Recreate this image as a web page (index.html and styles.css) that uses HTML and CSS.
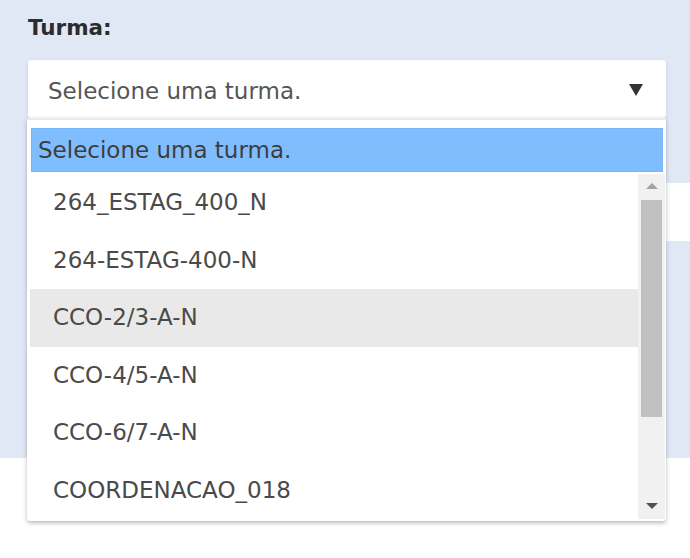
FILE: index.html
```html
<!DOCTYPE html>
<html lang="pt-BR">
<head>
<meta charset="utf-8">
<title>Turma</title>
<link rel="stylesheet" href="styles.css">
</head>
<body>
<div class="page">
  <div class="panel">
    <div class="label">Turma:</div>
    <div class="select">
      <span class="select-text">Selecione uma turma.</span>
      <span class="caret"></span>
    </div>
    <div class="field2"></div>
  </div>
  <div class="footer"></div>

  <div class="dropdown">
    <div class="option-selected">Selecione uma turma.</div>
    <div class="list">
      <div class="items">
        <div class="item">264_ESTAG_400_N</div>
        <div class="item">264-ESTAG-400-N</div>
        <div class="item hover">CCO-2/3-A-N</div>
        <div class="item">CCO-4/5-A-N</div>
        <div class="item">CCO-6/7-A-N</div>
        <div class="item">COORDENACAO_018</div>
      </div>
      <div class="scrollbar">
        <div class="sb-btn"><span class="sb-up"></span></div>
        <div class="sb-thumb"></div>
        <div class="sb-space"></div>
        <div class="sb-btn"><span class="sb-down"></span></div>
      </div>
    </div>
  </div>
</div>
</body>
</html>
```

FILE: styles.css
```css
html, body {
  margin: 0;
  padding: 0;
  background: #ffffff;
  font-family: "DejaVu Sans", "Liberation Sans", sans-serif;
}

.page {
  position: relative;
  width: 690px;
  height: 558px;
  overflow: hidden;
}

.panel {
  height: 458px;
  background: #e1e8f5;
  padding: 16px 0 0 28px;
  box-sizing: border-box;
}

.footer {
  height: 100px;
  background: #ffffff;
}

.label {
  font-size: 21.5px;
  font-weight: bold;
  line-height: 24px;
  color: #2c2c2c;
  margin-bottom: 20px;
}

.select {
  height: 58px;
  margin-right: 24px;
  box-sizing: border-box;
  background: #ffffff;
  border-radius: 3px;
  box-shadow: 0 1px 3px rgba(0, 0, 0, 0.14);
  display: flex;
  align-items: center;
  justify-content: space-between;
  padding: 4px 23px 0 20px;
}

.select-text {
  font-size: 23px;
  line-height: 26px;
  color: #555555;
}

.caret {
  width: 0;
  height: 0;
  border-left: 7px solid transparent;
  border-right: 7px solid transparent;
  border-top: 12px solid #333333;
  margin-top: -2px;
}

.field2 {
  margin-top: 65px;
  height: 58px;
  background: #ffffff;
}

.dropdown {
  position: absolute;
  z-index: 2;
  left: 27px;
  top: 118px;
  width: 635px;
  background: #ffffff;
  border-top: 2px solid #ebebeb;
  padding: 8px 1px 2px 3px;
  box-shadow: 0 2px 4px rgba(0, 0, 0, 0.28);
  border-radius: 0 0 3px 3px;
}

.option-selected {
  height: 44px;
  box-sizing: border-box;
  margin: 0 2px 0 1px;
  background: #80bdff;
  border: 1px solid #74b5fb;
  padding-left: 6px;
  font-size: 23px;
  line-height: 42px;
  color: #3d3d3d;
  white-space: nowrap;
}

.list {
  margin-top: 2px;
  display: flex;
  height: 345px;
}

.items {
  flex: 1;
}

.item {
  height: 57.5px;
  line-height: 57.5px;
  padding-left: 23px;
  font-size: 23px;
  color: #4a4a4a;
  white-space: nowrap;
}

.item.hover {
  background: #e9e9e9;
}

.scrollbar {
  width: 27px;
  background: #f1f1f1;
  display: flex;
  flex-direction: column;
}

.sb-btn {
  height: 26px;
  display: flex;
  align-items: center;
  justify-content: center;
}

.sb-up {
  width: 0;
  height: 0;
  border-left: 6px solid transparent;
  border-right: 6px solid transparent;
  border-bottom: 6px solid #a3a3a3;
  margin-top: -2px;
}

.sb-down {
  width: 0;
  height: 0;
  border-left: 6px solid transparent;
  border-right: 6px solid transparent;
  border-top: 6px solid #505050;
  margin-top: -1px;
}

.sb-thumb {
  height: 217px;
  margin: 0 3px;
  background: #c1c1c1;
}

.sb-space {
  flex: 1;
}
```
